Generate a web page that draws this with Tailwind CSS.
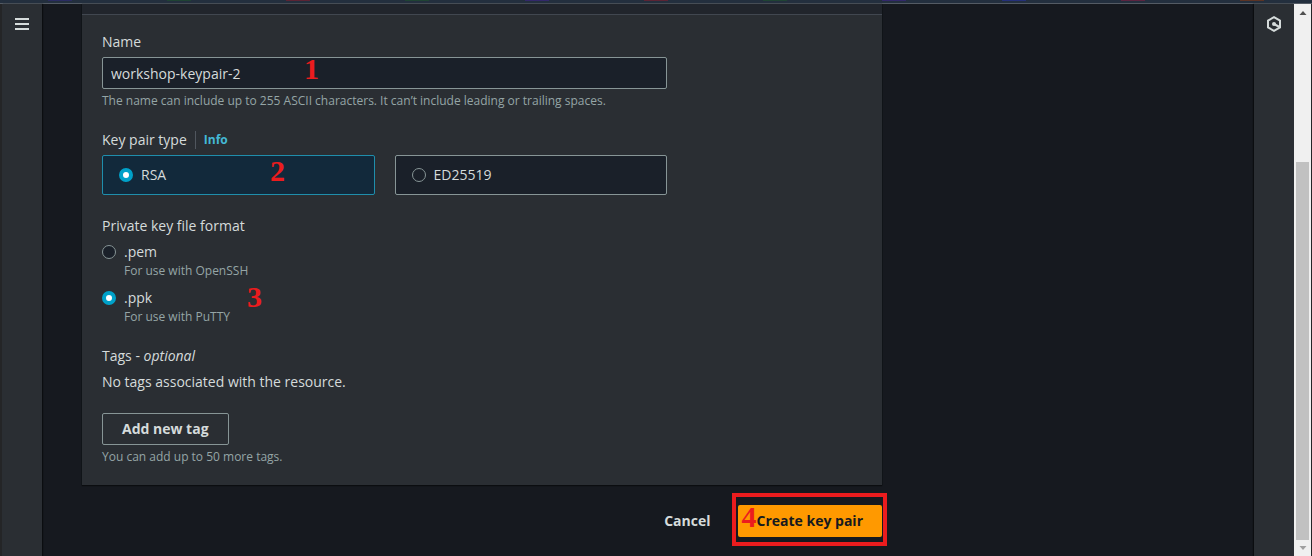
<!DOCTYPE html>
<html lang="en">
<head>
<meta charset="utf-8">
<meta name="viewport" content="width=device-width, initial-scale=1">
<title>Create key pair</title>
<script src="https://cdn.jsdelivr.net/npm/@tailwindcss/browser@4"></script>
</head>
<body class="flex h-screen flex-col overflow-hidden bg-[#16191f] font-['Open_Sans',sans-serif] text-sm leading-[22px] text-[#d5dbdb]">
<header class="flex h-1 shrink-0 justify-around border-b border-[#545b64] bg-[#232f3e]">
  <span class="h-px w-6 bg-[#2b2c63]"></span>
  <span class="h-px w-6 bg-[#1f4433]"></span>
  <span class="h-px w-6 bg-[#5c2434]"></span>
  <span class="h-px w-6 bg-[#1f4433]"></span>
  <span class="h-px w-6 bg-[#33286b]"></span>
  <span class="h-px w-6 bg-[#5c2434]"></span>
  <span class="h-px w-6 bg-[#1f4433]"></span>
  <span class="h-px w-6 bg-[#33286b]"></span>
  <span class="h-px w-6 bg-[#25307a]"></span>
  <span class="h-px w-6 bg-[#5c2440]"></span>
  <span class="h-px w-6 bg-[#5c3424]"></span>
</header>
<div class="flex min-h-0 flex-1 border-x border-l-2 border-[#242527]">
  <nav class="w-10 shrink-0 bg-[#2a2e33] shadow-[1px_0_1px_#0b0d10]">
    <button type="button" aria-label="Open navigation" class="flex h-10 w-10 items-center justify-center">
      <svg class="h-4 w-4" viewBox="0 0 16 16" fill="none" stroke="#d5dbdb" stroke-width="2"><path d="M1 3h14M1 8h14M1 13h14"/></svg>
    </button>
  </nav>

  <main class="min-w-0 flex-1 px-10">
    <form class="max-w-[800px]">
      <section class="bg-[#2a2e33] shadow-[0_1px_1px_#0b0d10,0_0_1px_#0b0d10]">
        <div class="h-[11px] border-b border-[#414750] bg-[#21252c]"></div>
        <div class="flex flex-col gap-5 px-5 pt-4 pb-5">
          <div class="relative flex max-w-[565px] flex-col gap-1">
            <label for="name">Name</label>
            <input id="name" type="text" value="workshop-keypair-2" class="h-8 rounded-xs border border-[#879596] bg-[#1a2029] px-2 outline-none">
            <p class="text-xs text-[#95a5a6]">The name can include up to 255 ASCII characters. It can’t include leading or trailing spaces.</p>
            <span class="absolute top-[23px] left-[202px] font-['Liberation_Serif',serif] text-[30px] leading-none font-bold text-[#eb1c1e]">1</span>
          </div>

          <div role="radiogroup" aria-labelledby="type-label" class="flex max-w-[565px] flex-col gap-1">
            <div class="flex items-center">
              <span id="type-label">Key pair type</span>
              <span class="ml-2 flex h-[18px] items-center border-l border-[#50565e] pl-2"><a href="#" class="text-xs font-bold text-[#44b9d6]">Info</a></span>
            </div>
            <div class="grid grid-cols-2 gap-5">
              <label class="relative flex h-10 items-center gap-2 rounded-xs border border-[#1f8eac] bg-[#12293b] px-4">
                <input type="radio" name="type" checked class="h-3.5 w-3.5 appearance-none rounded-full border border-[#879596] bg-[#1a2029] checked:border-4 checked:border-[#00a1c9] checked:bg-white">RSA
                <span class="absolute top-0 left-[167px] font-['Liberation_Serif',serif] text-[30px] leading-none font-bold text-[#eb1c1e]">2</span>
              </label>
              <label class="flex h-10 items-center gap-2 rounded-xs border border-[#879596] bg-[#1a2029] px-4">
                <input type="radio" name="type" class="h-3.5 w-3.5 appearance-none rounded-full border border-[#879596] bg-[#1a2029] checked:border-4 checked:border-[#00a1c9] checked:bg-white">ED25519
              </label>
            </div>
          </div>

          <div role="radiogroup" aria-labelledby="format-label">
            <span id="format-label" class="block">Private key file format</span>
            <div class="mt-1 flex flex-col gap-2">
              <label class="grid grid-cols-[14px_1fr] items-center gap-x-2">
                <input type="radio" name="format" class="h-3.5 w-3.5 appearance-none rounded-full border border-[#879596] bg-[#1a2029] checked:border-4 checked:border-[#00a1c9] checked:bg-white">
                <span>.pem</span>
                <span class="col-start-2 text-xs text-[#95a5a6]">For use with OpenSSH</span>
              </label>
              <label class="relative grid grid-cols-[14px_1fr] items-center gap-x-2">
                <input type="radio" name="format" checked class="h-3.5 w-3.5 appearance-none rounded-full border border-[#879596] bg-[#1a2029] checked:border-4 checked:border-[#00a1c9] checked:bg-white">
                <span>.ppk</span>
                <span class="col-start-2 text-xs text-[#95a5a6]">For use with PuTTY</span>
                <span class="absolute -top-[5px] left-[145px] font-['Liberation_Serif',serif] text-[30px] leading-none font-bold text-[#eb1c1e]">3</span>
              </label>
            </div>
          </div>

          <div class="flex flex-col gap-1">
            <h2>Tags - <i>optional</i></h2>
            <p>No tags associated with the resource.</p>
          </div>

          <div class="flex flex-col items-start gap-1">
            <button type="button" class="h-8 rounded-xs border border-[#879596] px-[19px] font-bold">Add new tag</button>
            <p class="text-xs text-[#95a5a6]">You can add up to 50 more tags.</p>
          </div>
        </div>
      </section>

      <div class="mt-5 flex justify-end gap-2">
        <button type="button" class="h-8 px-[19px] font-bold">Cancel</button>
        <div class="relative">
          <button type="submit" class="h-8 rounded-xs bg-[#ff9900] px-[19px] font-bold text-[#16191f]">Create key pair</button>
          <span class="absolute -top-3 -right-[5px] -bottom-[9px] -left-1.5 border-4 border-[#eb1c1e]"></span>
          <span class="absolute -top-[3px] left-1 font-['Liberation_Serif',serif] text-[30px] leading-none font-bold text-[#eb1c1e]">4</span>
        </div>
      </div>
    </form>
  </main>

  <aside class="w-10 shrink-0 bg-[#2a2e33] shadow-[-1px_0_1px_#0b0d10]">
    <button type="button" aria-label="Open tools" class="flex h-10 w-10 items-center justify-center">
      <svg class="h-4 w-4" viewBox="0 0 16 16" fill="none" stroke="#d5dbdb" stroke-width="2"><path d="M8 1.200l6 3.400v6.800l-6 3.400-6-3.400V4.600z"/><circle cx="8" cy="8" r="2" fill="#d5dbdb" stroke="none"/><path d="M8 8l5.500 3"/></svg>
    </button>
  </aside>
  <div aria-hidden="true" class="flex w-[17px] shrink-0 flex-col items-center bg-[#f0f0f0]">
    <svg class="h-[17px] w-4 shrink-0" viewBox="0 0 16 17"><path d="M4.500 11L8 7l3.500 4z" fill="#505050"/></svg>
    <div class="flex w-[13px] flex-1 flex-col"><div class="flex-[141]"></div><div class="flex-[378] bg-[#c1c1c1]"></div></div>
    <svg class="h-4 w-4 shrink-0" viewBox="0 0 16 16"><path d="M4.500 6L8 10l3.500-4z" fill="#a0a0a0"/></svg>
  </div>
</div>
</body>
</html>
